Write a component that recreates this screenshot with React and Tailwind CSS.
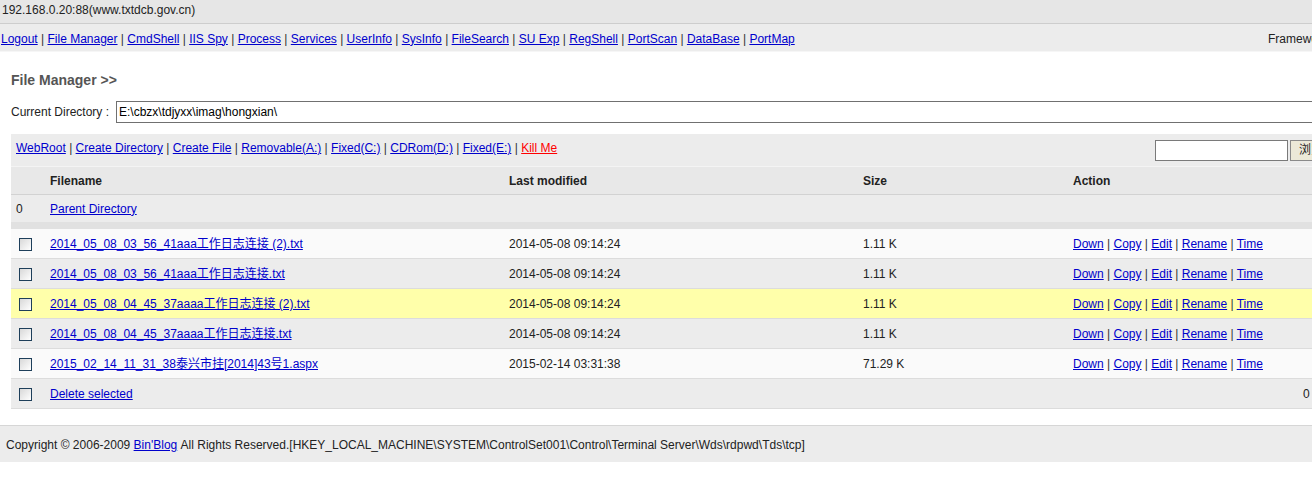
import React from 'react';

const navLinks = [
  'Logout', 'File Manager', 'CmdShell', 'IIS Spy', 'Process', 'Services', 'UserInfo',
  'SysInfo', 'FileSearch', 'SU Exp', 'RegShell', 'PortScan', 'DataBase', 'PortMap',
];

const toolLinks = [
  { label: 'WebRoot' },
  { label: 'Create Directory' },
  { label: 'Create File' },
  { label: 'Removable(A:)' },
  { label: 'Fixed(C:)' },
  { label: 'CDRom(D:)' },
  { label: 'Fixed(E:)' },
  { label: 'Kill Me', red: true },
];

const files = [
  { name: '2014_05_08_03_56_41aaa工作日志连接 (2).txt', date: '2014-05-08 09:14:24', size: '1.11 K', bg: 'bg-[#fafafa]' },
  { name: '2014_05_08_03_56_41aaa工作日志连接.txt', date: '2014-05-08 09:14:24', size: '1.11 K', bg: 'bg-[#ececec]' },
  { name: '2014_05_08_04_45_37aaaa工作日志连接 (2).txt', date: '2014-05-08 09:14:24', size: '1.11 K', bg: 'bg-[#ffffaa]' },
  { name: '2014_05_08_04_45_37aaaa工作日志连接.txt', date: '2014-05-08 09:14:24', size: '1.11 K', bg: 'bg-[#ececec]' },
  { name: '2015_02_14_11_31_38泰兴市挂[2014]43号1.aspx', date: '2015-02-14 03:31:38', size: '71.29 K', bg: 'bg-[#fafafa]' },
];

const actions = ['Down', 'Copy', 'Edit', 'Rename', 'Time'];

const grid = 'grid grid-cols-[39px_459px_354px_210px_230px_1fr] items-center';

const A = ({ children, red }) => (
  <a href="#" className={red ? 'text-[#ff0000] underline' : 'text-[#0000cc] underline'}>
    {children}
  </a>
);

const LinkList = ({ items }) => (
  <span className="whitespace-nowrap">
    {items.map((it, i) => (
      <React.Fragment key={it.label}>
        {i > 0 && <span className="text-[#333]"> | </span>}
        <A red={it.red}>{it.label}</A>
      </React.Fragment>
    ))}
  </span>
);

const Checkbox = () => (
  <div className="ml-[8px] w-[13px] h-[13px] border border-[#1e3f5a] bg-gradient-to-br from-[#d8d8d8] to-white" />
);

export default function App() {
  return (
    <div className="w-[1312px] h-[493px] overflow-hidden bg-white text-[12px] text-[#222] font-['Liberation_Sans',Arial,'Noto_Sans_CJK_SC',sans-serif]">
      {/* address bar */}
      <div className="h-[24px] bg-[#e6e6e6] border-b border-[#cdcdcd] pl-[2px] leading-[21px] text-[#222]">
        192.168.0.20:88(www.txtdcb.gov.cn)
      </div>

      {/* top menu */}
      <div className="h-[28px] pt-[2px] bg-[#ececec] border-b border-[#f6f6f6] grid grid-cols-[1268px_1fr] items-center">
        <div className="pl-[1px]">
          <LinkList items={navLinks.map((l) => ({ label: l }))} />
        </div>
        <div className="whitespace-nowrap overflow-hidden">Framework Ver: 2.0.50727.3643</div>
      </div>

      <div className="pl-[11px] w-[1335px]">
        <div className="pt-[20px] leading-[16px] text-[14px] font-bold text-[#555]">File Manager &gt;&gt;</div>

        <div className="mt-[13px] flex items-center">
          <div className="w-[105px] text-[#222]">Current Directory :</div>
          <div className="flex-1 h-[22px] border border-[#707070] pl-[2px] leading-[20px] text-black">
            E:\cbzx\tdjyxx\imag\hongxian\
          </div>
        </div>

        {/* toolbar */}
        <div className="mt-[11px] h-[33px] bg-[#ececec] border-b border-[#f4f4f4] flex items-center justify-between pl-[5px] pr-[5px]">
          <div className="mb-[4px]">
            <LinkList items={toolLinks} />
          </div>
          <div className="flex items-center gap-[2px]">
            <div className="w-[133px] h-[21px] border border-[#7a7a7a] bg-white" />
            <div className="w-[40px] h-[21px] border border-[#8a8a8a] bg-[#ece9d8] pl-[8px] leading-[19px] text-[12px] overflow-hidden whitespace-nowrap">
              浏览...
            </div>
          </div>
        </div>

        {/* table */}
        <div className={`${grid} h-[28px] pt-[1px] bg-[#e8e8e8] border-b border-[#d2d2d2] font-bold text-[#222]`}>
          <div />
          <div>Filename</div>
          <div>Last modified</div>
          <div>Size</div>
          <div className="col-span-2">Action</div>
        </div>
        <div className={`${grid} h-[27px] bg-[#ececec]`}>
          <div className="pl-[5px]">0</div>
          <div><A>Parent Directory</A></div>
        </div>
        <div className="h-[7px] bg-[#e1e1e1]" />

        {files.map((f) => (
          <div key={f.name} className={`${grid} h-[30px] pt-[1px] border-b border-[#dcdcdc] ${f.bg}`}>
            <Checkbox />
            <div className="whitespace-nowrap"><A>{f.name}</A></div>
            <div>{f.date}</div>
            <div>{f.size}</div>
            <div className="col-span-2">
              <LinkList items={actions.map((a) => ({ label: a }))} />
            </div>
          </div>
        ))}

        <div className={`${grid} h-[30px] pt-[1px] border-b border-[#dcdcdc] bg-[#ececec]`}>
          <Checkbox />
          <div className="col-span-3"><A>Delete selected</A></div>
          <div />
          <div className="whitespace-nowrap">0 directories / 5 files</div>
        </div>
      </div>

      {/* footer */}
      <div className="mt-[16px] h-[37px] pt-[2px] border-t border-[#d6d6d6] bg-[#ececec] pl-[6px] flex items-center whitespace-nowrap">
        Copyright © 2006-2009&nbsp;<A>Bin'Blog</A>&nbsp;All Rights Reserved.[HKEY_LOCAL_MACHINE\SYSTEM\ControlSet001\Control\Terminal Server\Wds\rdpwd\Tds\tcp]
      </div>
    </div>
  );
}
